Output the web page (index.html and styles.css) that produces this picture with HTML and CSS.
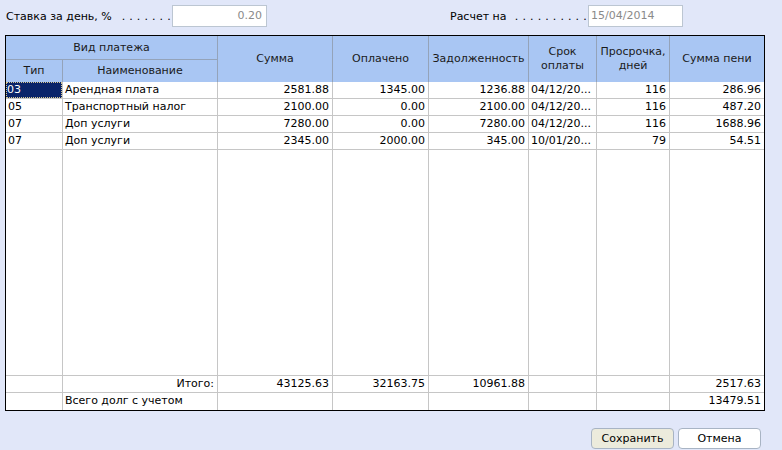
FILE: index.html
```html
<!DOCTYPE html>
<html lang="ru">
<head>
<meta charset="utf-8">
<title>Расчет пени</title>
<link rel="stylesheet" href="styles.css">
</head>
<body>
<div class="form">
  <div class="topbar">
    <div class="field field-rate">
      <span class="label">Ставка за день, %</span>
      <span class="dots">. . . . . . .</span>
      <div class="input num">0.20</div>
    </div>
    <div class="field field-date">
      <span class="label">Расчет на</span>
      <span class="dots">. . . . . . . . . .</span>
      <div class="input">15/04/2014</div>
    </div>
  </div>

  <div class="grid-wrap">
    <div class="grid">
      <div class="h h-group">Вид платежа</div>
      <div class="h h-sub col1">Тип</div>
      <div class="h h-sub col2">Наименование</div>
      <div class="h h-tall col3">Сумма</div>
      <div class="h h-tall col4">Оплачено</div>
      <div class="h h-tall col5">Задолженность</div>
      <div class="h h-tall col6">Срок<br>оплаты</div>
      <div class="h h-tall col7">Просрочка,<br>дней</div>
      <div class="h h-tall col8 last">Сумма пени</div>

      <div class="c sel"><span>03</span></div>
      <div class="c">Арендная плата</div>
      <div class="c r">2581.88</div>
      <div class="c r">1345.00</div>
      <div class="c r">1236.88</div>
      <div class="c">04/12/20...</div>
      <div class="c r">116</div>
      <div class="c r last">286.96</div>

      <div class="c">05</div>
      <div class="c">Транспортный налог</div>
      <div class="c r">2100.00</div>
      <div class="c r">0.00</div>
      <div class="c r">2100.00</div>
      <div class="c">04/12/20...</div>
      <div class="c r">116</div>
      <div class="c r last">487.20</div>

      <div class="c">07</div>
      <div class="c">Доп услуги</div>
      <div class="c r">7280.00</div>
      <div class="c r">0.00</div>
      <div class="c r">7280.00</div>
      <div class="c">04/12/20...</div>
      <div class="c r">116</div>
      <div class="c r last">1688.96</div>

      <div class="c">07</div>
      <div class="c">Доп услуги</div>
      <div class="c r">2345.00</div>
      <div class="c r">2000.00</div>
      <div class="c r">345.00</div>
      <div class="c">10/01/20...</div>
      <div class="c r">79</div>
      <div class="c r last">54.51</div>

      <div class="c fill"></div>
      <div class="c fill"></div>
      <div class="c fill"></div>
      <div class="c fill"></div>
      <div class="c fill"></div>
      <div class="c fill"></div>
      <div class="c fill"></div>
      <div class="c fill last"></div>

      <div class="c"></div>
      <div class="c r">Итого:</div>
      <div class="c r">43125.63</div>
      <div class="c r">32163.75</div>
      <div class="c r">10961.88</div>
      <div class="c"></div>
      <div class="c"></div>
      <div class="c r last">2517.63</div>

      <div class="c nb"></div>
      <div class="c nb">Всего долг с учетом</div>
      <div class="c nb"></div>
      <div class="c nb"></div>
      <div class="c nb"></div>
      <div class="c nb"></div>
      <div class="c nb"></div>
      <div class="c r nb last">13479.51</div>
    </div>
  </div>

  <div class="buttons">
    <button class="btn btn-default">Сохранить</button>
    <button class="btn">Отмена</button>
  </div>
</div>
</body>
</html>
```

FILE: styles.css
```css
html, body {
  margin: 0;
  padding: 0;
}
body {
  background: #e1e7f9;
  font-family: "DejaVu Sans", Tahoma, sans-serif;
  font-size: 11px;
  color: #000;
  width: 782px;
  height: 450px;
  overflow: hidden;
}
.form {
  padding: 5px 0 0 5px;
}
.topbar {
  display: flex;
  height: 22px;
  margin-bottom: 8px;
}
.field {
  display: flex;
  align-items: center;
}
.field-rate {
  width: 262px;
}
.field-date {
  width: 234px;
  margin-left: 182px;
}
.field .label {
  padding-left: 1px;
  white-space: nowrap;
}
.field .dots {
  margin-left: auto;
  margin-right: 1px;
  white-space: nowrap;
  letter-spacing: 0.3px;
  color: #000;
}
.input {
  box-sizing: border-box;
  flex: none;
  height: 22px;
  width: 95px;
  background: #fff;
  border: 1px solid #bcc6d2;
  color: #8a8a8a;
  line-height: 20px;
  padding: 0 4px 0 2px;
}
.input.num {
  text-align: right;
}
.grid-wrap {
  width: 760px;
  box-sizing: border-box;
  border: 1px solid #000;
  background: #fff;
}
.grid {
  display: grid;
  grid-template-columns: 57px 155px 115px 96px 100px 68px 73px 94px;
  grid-template-rows: 24px 22px 17px 17px 17px 17px 226px 17px 17px;
}
.h {
  box-sizing: border-box;
  background: #a9c6f3;
  border-right: 1px solid #94a3b9;
  border-bottom: 1px solid #94a3b9;
  color: #1a1a1a;
  display: flex;
  align-items: center;
  justify-content: center;
  text-align: center;
  line-height: 14px;
}
.h-group {
  grid-row: 1;
  grid-column: 1 / 3;
}
.h-sub {
  grid-row: 2;
  border-bottom: none;
}
.h-tall {
  grid-row: 1 / 3;
  border-bottom: none;
}
.col1 { grid-column: 1; }
.col2 { grid-column: 2; }
.col3 { grid-column: 3; }
.col4 { grid-column: 4; }
.col5 { grid-column: 5; }
.col6 { grid-column: 6; }
.col7 { grid-column: 7; }
.col8 { grid-column: 8; }
.c {
  box-sizing: border-box;
  border-right: 1px solid #c6c6c6;
  border-bottom: 1px solid #c6c6c6;
  line-height: 16px;
  padding: 0 2px;
  white-space: nowrap;
  overflow: hidden;
}
.c.r {
  text-align: right;
  padding-right: 3px;
}
.last {
  border-right: none;
}
.nb {
  border-bottom: none;
}
.sel {
  padding: 0;
}
.sel span {
  display: block;
  height: 16px;
  background: #0a246a;
  color: #fff;
  padding-left: 1px;
  outline: 1px dotted #d8c890;
  outline-offset: -1px;
}
.buttons {
  display: flex;
  justify-content: flex-end;
  gap: 4px;
  margin-top: 17px;
  padding-right: 21px;
}
.btn {
  box-sizing: border-box;
  width: 83px;
  height: 21px;
  font-family: inherit;
  font-size: 11px;
  color: #000;
  background: #fff;
  border: 1px solid #a8b4c4;
  border-radius: 4px;
  padding: 0;
}
.btn-default {
  background: #ecebdc;
}
```
